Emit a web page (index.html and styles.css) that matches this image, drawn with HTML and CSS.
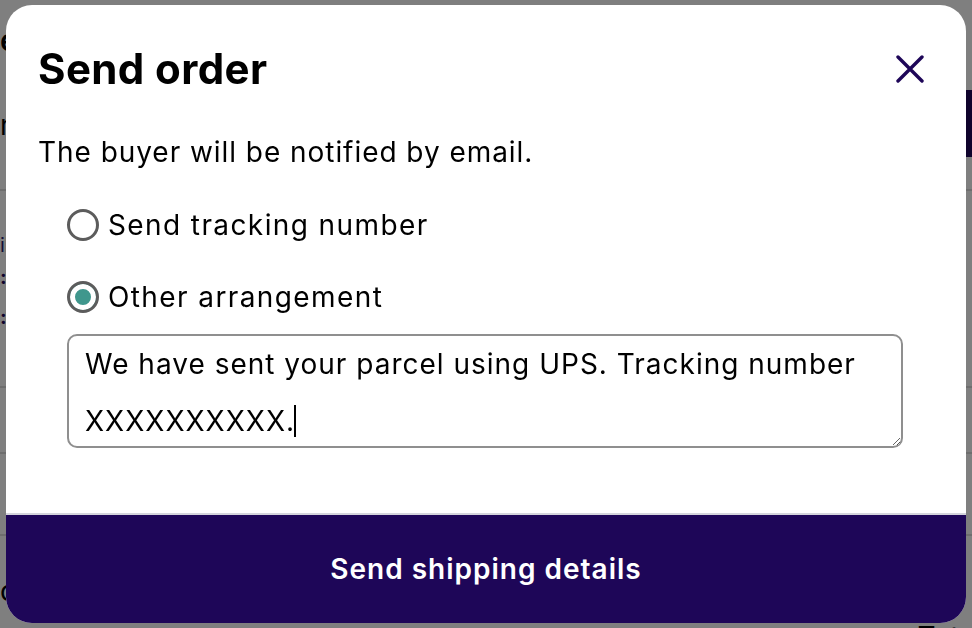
FILE: index.html
```html
<!DOCTYPE html>
<html lang="en">
<head>
<meta charset="UTF-8">
<meta name="viewport" content="width=device-width, initial-scale=1.0">
<title>Send order</title>
<link rel="stylesheet" href="styles.css">
</head>
<body>
<main class="page">
  <section class="block block-head">
    <div class="head-text">
      <h1 class="page-title">e</h1>
      <div class="page-sub">n</div>
    </div>
    <button class="page-action">Ship</button>
  </section>
  <section class="block block-info">
    <a class="info-link" href="#">il</a>
    <div class="info-line">: :</div>
    <div class="info-line">: :</div>
  </section>
  <section class="block block-row"></section>
  <section class="block block-row2"></section>
  <section class="block block-foot">
    <span class="foot-left">o</span>
    <span class="foot-total">Total</span>
  </section>
</main>

<div class="overlay">
  <div class="modal">
    <div class="modal-body">
      <div class="modal-header">
        <h2 class="modal-title">Send order</h2>
        <button class="close-btn" aria-label="Close">
          <svg width="28" height="28" viewBox="0 0 28 28" fill="none" stroke="currentColor" stroke-width="3.4" stroke-linecap="round">
            <path d="M2 2L26 26M26 2L2 26"/>
          </svg>
        </button>
      </div>
      <p class="modal-text">The buyer will be notified by email.</p>
      <div class="options">
        <label class="option">
          <input type="radio" name="ship" value="tracking">
          <span>Send tracking number</span>
        </label>
        <label class="option">
          <input type="radio" name="ship" value="other" checked>
          <span>Other arrangement</span>
        </label>
        <div class="message" contenteditable="true" role="textbox" aria-multiline="true">We have sent your parcel using UPS. Tracking number<br>XXXXXXXXXX.<span class="caret"></span></div>
      </div>
    </div>
    <button class="send-btn">Send shipping details</button>
  </div>
</div>
</body>
</html>
```

FILE: styles.css
```css
body { margin: 0; background: #fff; font-family: Inter, "Liberation Sans", sans-serif; color: #000; overflow: hidden; }

/* page behind the dialog */
.page { width: 972px; height: 628px; }
.block { border-bottom: 2px solid #ddd; box-sizing: border-box; }
.block-head { height: 191px; display: flex; justify-content: space-between; align-items: flex-start; }
.head-text { padding-top: 22px; }
.page-title { margin: 0; font-size: 30px; line-height: 36px; font-weight: 600; }
.page-sub { margin-top: 50px; font-size: 28px; }
.page-action { margin-top: 90px; width: 120px; height: 67px; border: none; background: #1e0658; color: #fff; font-size: 20px; }
.block-info { height: 197px; padding-top: 42px; }
.info-link { display: block; color: #2a1a70; font-size: 20px; text-decoration: none; }
.info-line { color: #1e0658; font-size: 20px; line-height: 40px; font-weight: 700; }
.block-row { height: 66px; }
.block-row2 { height: 82px; }
.block-foot { border: none; display: flex; justify-content: space-between; padding: 38px 0 0; font-size: 28px; }
.foot-total { padding-top: 46px; margin-right: -10px; }

/* dialog */
.overlay { position: fixed; inset: 0; background: rgba(0, 0, 0, 0.5); display: flex; justify-content: center; align-items: flex-start; padding-top: 5px; }
.modal { width: 960px; height: 618px; background: #fff; border-radius: 26px; overflow: hidden; display: flex; flex-direction: column; }
.modal-body { flex: 1; padding: 40px 32px 0 32px; }
.modal-header { display: flex; justify-content: space-between; align-items: center; }
.modal-title { margin: 0; font-size: 42px; line-height: 48px; font-weight: 700; letter-spacing: 0.4px; }
.close-btn { background: none; border: none; padding: 0; margin-right: 10px; color: #1e0658; display: flex; cursor: pointer; }
.modal-text { margin: 42px 0 0; font-size: 28px; line-height: 34px; letter-spacing: 0.95px; }
.options { padding-left: 29px; margin-top: 39px; display: flex; flex-direction: column; }
.option { display: flex; align-items: center; gap: 9px; font-size: 28px; line-height: 34px; letter-spacing: 1.4px; margin-bottom: 38px; cursor: pointer; }
.option:last-of-type { margin-bottom: 20px; }
.option input { appearance: none; margin: 0; width: 32px; height: 32px; border: 3px solid #5c5c5c; border-radius: 50%; background: #fff; }
.option input:checked { background: #3f978d; box-shadow: inset 0 0 0 5px #fff; }
.message { width: 836px; height: 114px; box-sizing: border-box; border: 2px solid #8f8f8f; border-radius: 10px; padding: 0 16px; font-size: 28px; line-height: 57px; letter-spacing: 1px; color: #000; outline: none; overflow: auto; resize: both; white-space: nowrap; }
.caret { display: inline-block; width: 2px; height: 32px; background: #000; vertical-align: -6px; margin-left: -1px; }
.send-btn { height: 110px; border: none; border-top: 2px solid #d4d4dc; background: #1e0658; color: #fff; font-family: inherit; font-size: 28px; font-weight: 600; letter-spacing: 1px; cursor: pointer; }
```
